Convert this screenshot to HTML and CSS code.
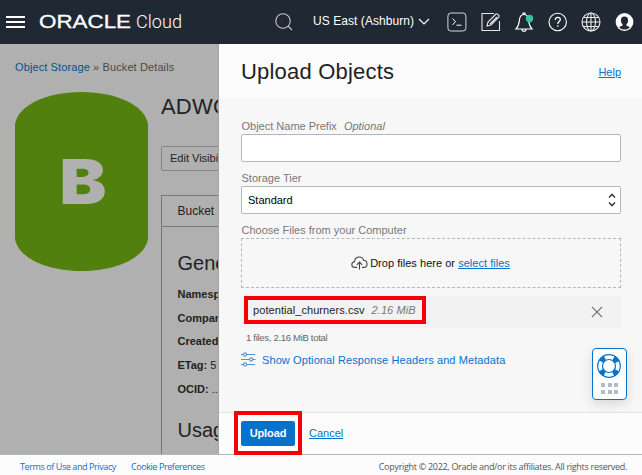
FILE: index.html
```html
<!DOCTYPE html>
<html lang="en">
<head>
<meta charset="utf-8">
<title>Upload Objects</title>
<link rel="stylesheet" href="styles.css">
</head>
<body>
<header class="topbar">
  <svg class="menu" width="20" height="12" viewBox="0 0 20 12"><path d="M0 1h19M0 6h19M0 11h19" stroke="#fff" stroke-width="2"/></svg>
  <svg class="brand" width="144" height="24" viewBox="0 0 144 24" fill="#fff">
    <text class="oracle" x="0" y="18" textLength="92" lengthAdjust="spacingAndGlyphs">ORACLE</text>
    <text class="cloud" x="97" y="18" textLength="46" lengthAdjust="spacingAndGlyphs">Cloud</text>
  </svg>
  <svg class="search" width="18" height="18" viewBox="0 0 18 18" fill="none" stroke="#c4c7ca" stroke-width="1.1"><circle cx="8" cy="8" r="7.2"/><path d="M13 13l4 4"/></svg>
  <span class="region">US East (Ashburn)</span>
  <svg class="caret" width="12" height="8" viewBox="0 0 12 8" fill="none" stroke="#fff" stroke-width="1.2"><path d="M1 1l5 5 5-5"/></svg>
  <nav class="tools">
    <svg width="20" height="20" viewBox="0 0 20 20" fill="none" stroke="#d5d7d9"><rect x=".9" y="1" width="18" height="18" rx="3"/><path d="M5.5 6.5l3 3.2-3 3.2M9.5 13.2h5" stroke="#fff"/></svg>
    <svg width="20" height="20" viewBox="0 0 20 20" fill="none" stroke="#e5e6e7" stroke-width="1.1"><path d="M13 1.5H1v17h17.5V9M6 14l1-4 8-8c1-1 4 1.500 3 3l-8 8-4 1zM9 12l7-7"/></svg>
    <svg width="20" height="20" viewBox="0 0 20 20" fill="none" stroke="#fff" stroke-width="1.2"><path d="M2 17h16c-3-3-3-5-3.400-9C14.200 4 12 2.500 10 2.500S5.800 4 5.400 8C5 12 5 14 2 17zM8 17c0 3 4 3 4 0M9 2.500V1h2v1.500"/><circle cx="15.500" cy="6.500" r="3.700" fill="#35c4a2" stroke="none"/></svg>
    <svg width="20" height="20" viewBox="0 0 20 20" fill="none" stroke="#fff" stroke-width="1.1"><circle cx="9.700" cy="10" r="8.700"/><path d="M7.300 8c0-3.500 5-3.500 5-.5 0 2-2.500 2-2.500 4.500M9.800 13.200v1.600" stroke-width="1.300"/></svg>
    <svg width="20" height="20" viewBox="0 0 20 20" fill="none" stroke="#e8e9ea" stroke-width="1.100"><circle cx="10" cy="10" r="9"/><ellipse cx="10" cy="10" rx="4.500" ry="9"/><path d="M10 1v18M1 10h18M2.500 5.500h15M2.500 14.500h15"/></svg>
    <svg width="20" height="20" viewBox="0 0 20 20"><circle cx="9.500" cy="10" r="8.900" fill="#fff"/><path d="M9.500 4.500c2.400 0 3.600 1.500 3.600 3.800 0 2-.6 3.200-1.600 4v1.400l3.500 1.300c-1.500 1.800-3.300 2.600-5.500 2.600S5.500 16.800 4 15l3.500-1.300v-1.400c-1-.8-1.600-2-1.600-4 0-2.300 1.200-3.800 3.600-3.800z" fill="#1f2833"/></svg>
  </nav>
</header>

<main class="workspace">
  <section class="bucket">
    <p class="crumbs"><a>Object Storage</a> » Bucket Details</p>
    <div class="bucket-row">
      <svg class="cylinder" width="133" height="179" viewBox="0 0 133 179">
        <path d="M0 32C3 14 30 0 66.500 0S130 14 133 32V147C130 165 103 179 66.500 179S3 165 0 147z" fill="#52800f"/>
        <text class="letter" x="44.500" y="112" textLength="47" lengthAdjust="spacingAndGlyphs" fill="#b0b0b0">B</text>
      </svg>
      <div class="details">
        <h1>ADWC</h1>
        <span class="edit">Edit Visibility</span>
        <div class="card">
          <div class="tab">Bucket</div>
          <div class="info">
            <h2>General</h2>
            <p><b>Namespace</b></p>
            <p><b>Compartment</b></p>
            <p><b>Created</b></p>
            <p><b>ETag:</b> 5</p>
            <p><b>OCID:</b> ...</p>
            <h2 class="usage">Usage</h2>
          </div>
        </div>
      </div>
    </div>
  </section>

  <section class="panel">
    <div class="panel-head"><h2>Upload Objects</h2><a class="link help">Help</a></div>
    <div class="panel-body">
      <div class="label">Object Name Prefix<i>Optional</i></div>
      <div class="field"></div>
      <div class="label">Storage Tier</div>
      <div class="field"><span>Standard</span>
        <svg width="8" height="14" viewBox="0 0 8 14" fill="none" stroke="#444" stroke-width="1.700"><path d="M1 4.500l3-3 3 3M1 9.500l3 3 3-3"/></svg>
      </div>
      <div class="label">Choose Files from your Computer</div>
      <div class="drop">
        <svg width="17" height="14" viewBox="0 0 17 14" fill="none" stroke="#444" stroke-width="1.100"><path d="M6 11.400H4C-.3 11.400 0 6 3.500 5.700 4 0 11.300-.5 12.500 4.300c4.700.2 4.700 7 0 7.100H11M8.500 13.500V6.500M5.800 8.800l2.700-2.700 2.700 2.700"/></svg>
        <span class="drop-text">Drop files here or <a class="link">select files</a></span>
      </div>
      <div class="file">
        <span class="highlight file-mark"><span class="filename">potential_churners.csv</span><i>2.16 MiB</i></span>
        <svg width="12" height="12" viewBox="0 0 12 12" stroke="#777" stroke-width="1.100"><path d="M1 1l10 10M11 1L1 11"/></svg>
      </div>
      <div class="total">1 files, 2.16 MiB total</div>
      <div class="options">
        <svg width="15" height="15" viewBox="0 0 15 15" fill="none" stroke="#4b96d5" stroke-width="1.100"><path d="M0 2.500h2.500M5.500 2.500H14M0 7.500h8.500M12 7.500h2.500M0 12.500h2.500M5.500 12.500H14"/><circle cx="4" cy="2.500" r="1.600"/><circle cx="10.200" cy="7.500" r="1.600"/><circle cx="4" cy="12.500" r="1.600"/></svg>
        <span>Show Optional Response Headers and Metadata</span>
      </div>
    </div>
    <div class="panel-foot">
      <span class="highlight upload-mark"><button class="upload">Upload</button></span>
      <a class="link cancel">Cancel</a>
    </div>
    <aside class="support">
      <svg width="24" height="24" viewBox="0 0 24 24" fill="none" stroke="#0572ce"><circle cx="12" cy="12" r="9" stroke-width="5" stroke-dasharray="5.200 8.937" stroke-dashoffset="-4.470"/><circle cx="12" cy="12" r="11.300" stroke-width="1.200"/><circle cx="12" cy="12" r="6.500" stroke-width="1.200"/></svg>
      <div class="dots"><b></b><b></b><b></b><b></b><b></b><b></b></div>
    </aside>
  </section>
</main>

<footer class="footer">
  <a class="terms">Terms of Use and Privacy</a><a class="cookies">Cookie Preferences</a>
  <span class="copyright">Copyright © 2022, Oracle and/or its affiliates. All rights reserved.</span>
</footer>
</body>
</html>
```
FILE: styles.css
```css
* { box-sizing: border-box; }
body {
  margin: 0;
  width: 642px;
  height: 475px;
  overflow: hidden;
  font: 11px/14px "Liberation Sans", Arial, sans-serif;
  color: #222;
  background: #fcfcfc;
}
h1, h2, p { margin: 0; font-weight: 400; }
svg { display: block; flex: none; }

.topbar { display: flex; align-items: center; height: 44px; padding-left: 6px; background: #1f2833; color: #fff; }
.menu { margin-right: 13px; }
.brand { margin: 0 92px 0 0; overflow: visible; }
.oracle { font: 400 18px "Liberation Sans", sans-serif; stroke: #fff; stroke-width: .3px; }
.cloud { font: 300 18.500px Roboto, sans-serif; }
.search { margin-right: 20px; }
.region { width: 102px; font-size: 12px; letter-spacing: .06px; white-space: nowrap; margin-top: -2px; }
.caret { margin-left: 3px; }
.tools { display: flex; gap: 13.600px; margin-left: 17px; }

.workspace { position: relative; display: flex; height: 410px; background: #b0b0b0; }
.bucket { width: 219px; padding: 16px 0 0 15px; overflow: hidden; border-right: 1px solid #a4a4a4; white-space: nowrap; }
.crumbs { color: #494949; letter-spacing: .11px; }
.crumbs a { color: #04508f; }
.bucket-row { display: flex; gap: 13px; margin-top: 18px; }
.letter { font: 900 62px Inter, sans-serif; }
.details { width: 200px; flex: none; }
.details h1 { font-size: 22px; line-height: 28px; letter-spacing: .2px; margin-top: 1px; }
.edit { display: block; width: 120px; height: 25px; margin-top: 25px; padding: 4px 8px; border: 1px solid #858585; border-radius: 2px; }
.card { height: 300px; margin-top: 24px; border: 1px solid #777; }
.tab { height: 31px; padding: 8px 15.500px; font-size: 12px; border-bottom: 1px solid #777; }
.info { padding: 24px 15.500px; }
.info h2 { font-size: 20px; line-height: 24px; margin-bottom: 12px; }
.info p { height: 23.700px; line-height: 14px; }
.info .usage { margin-top: 13px; }

.panel { position: relative; width: 423px; display: flex; flex-direction: column; background: #f7f7f7; }
.panel-head { display: flex; justify-content: space-between; height: 54px; padding: 14px 21px 0 22px; background: #fcfcfc; }
.panel-head h2 { font-size: 22px; line-height: 28px; letter-spacing: .2px; }
.help { margin-top: 7px; }
.link { color: #0572ce; text-decoration: underline; }
.panel-body { flex: 1; padding: 21px 21px 0 22px; }
.label { height: 15px; padding-left: .5px; line-height: 14px; color: #777; white-space: nowrap; }
.label i { margin-left: 7px; }
.field { display: flex; justify-content: space-between; align-items: center; height: 28px; margin-bottom: 9px; padding: 0 4px 0 6px; border: 1px solid #b0b7c2; border-radius: 2px; background: #fff; color: #000; }
.drop { display: flex; justify-content: center; align-items: center; gap: 2px; height: 50px; border: 1px dashed #b0b7c2; color: #111; }
.drop svg { margin-left: -1px; }
.drop-text { letter-spacing: .03px; }
.file { display: flex; align-items: center; justify-content: space-between; height: 32px; margin-top: 8px; padding: 0 18px 0 3px; background: #f2f2f2; }
.highlight { display: flex; border: 4px solid #f60008; }
.file-mark { align-items: center; width: 182px; height: 28px; margin-top: -4px; padding-left: 5px; letter-spacing: .07px; white-space: nowrap; }
.file-mark i { margin-left: 7px; color: #777; }
.total { margin: 3px 0 0 5px; font-size: 9.500px; line-height: 14px; letter-spacing: -.3px; color: #666; }
.options { display: flex; align-items: center; gap: 6px; margin-top: 7px; letter-spacing: .1px; color: #0572ce; white-space: nowrap; }
.panel-foot { display: flex; height: 42px; padding-left: 15px; border-top: 1px solid #e3e3e3; background: #fcfcfc; }
.upload-mark { width: 68px; height: 44px; margin-top: -2px; padding: 6px 3px; position: relative; z-index: 2; }
.upload { width: 54px; height: 25px; padding: 0 0 1px; border: 0; border-radius: 2px; background: #0572ce; color: #fff; font: bold 11px "Liberation Sans", Arial, sans-serif; letter-spacing: -.1px; }
.cancel { margin: 13px 0 0 7px; }
.support { position: absolute; left: 373px; top: 304px; width: 35px; height: 52px; padding: 5px 4px; border: 1px solid #0572ce; border-radius: 4px; background: #fff; box-shadow: 0 4px 12px rgba(0, 0, 0, .13); }
.dots { display: grid; grid-template-columns: repeat(3, 4px); gap: 3px 2.500px; justify-content: center; margin-top: 5px; }
.dots b { width: 4px; height: 4px; background: #b7bac3; }

.footer { display: flex; align-items: center; height: 21px; padding: 3px 15px 0 20px; border-top: 1px solid #b0b7c2; background: #fcfcfc; font: 9px/12px "Open Sans", sans-serif; letter-spacing: -.3px; white-space: nowrap; }
.footer a { color: #0572ce; letter-spacing: -.41px; }
.cookies { margin-left: 15px; }
.copyright { margin-left: auto; color: #555; }
```
